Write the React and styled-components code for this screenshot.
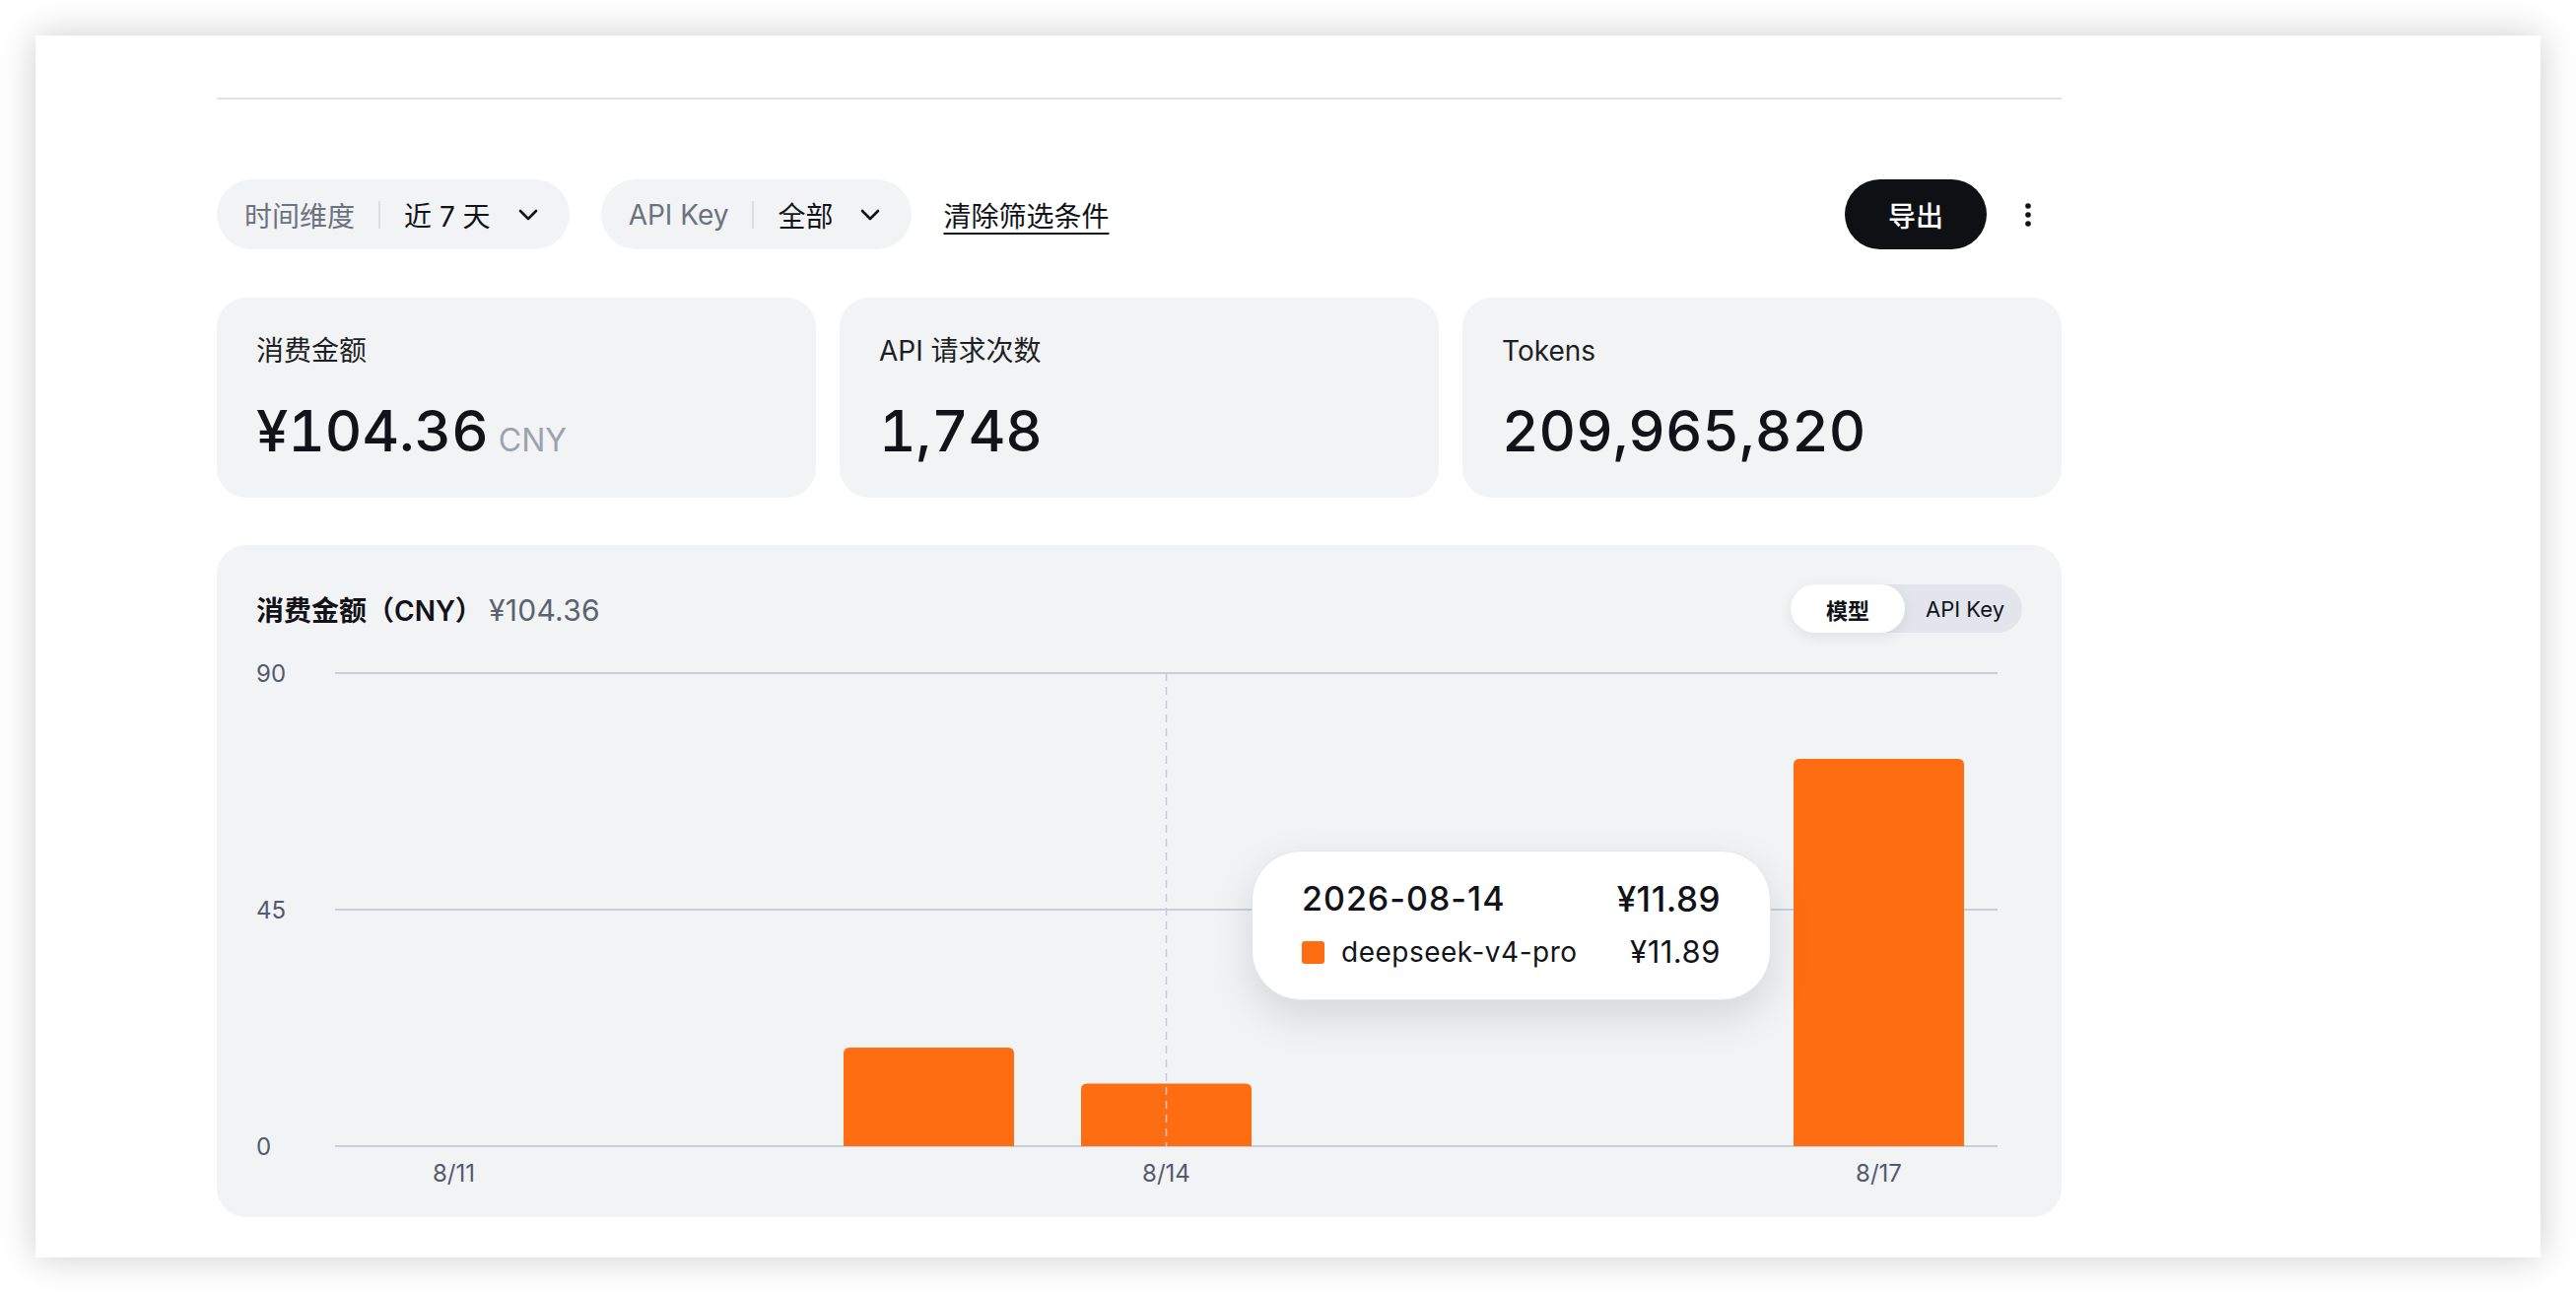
import styled, { createGlobalStyle } from "styled-components";

const GlobalStyle = createGlobalStyle`
  * { box-sizing: border-box; }
  body {
    margin: 0;
    background: #ffffff;
    font-family: "Inter", "Noto Sans CJK SC", sans-serif;
    color: #111318;
  }
`;

const Page = styled.div`
  padding: 36px;
  width: 2614px;
  height: 1312px;
`;

const Frame = styled.div`
  width: 2542px;
  height: 1240px;
  background: #fff;
  box-shadow: 0 0 36px rgba(0, 0, 0, 0.2);
  padding: 63px 0 0 184px;
`;

const Content = styled.div`
  width: 1872px;
`;

const Divider = styled.div`
  height: 2px;
  background: #e2e3e6;
`;

const FilterBar = styled.div`
  margin-top: 81px;
  height: 71px;
  display: flex;
  align-items: center;
  justify-content: space-between;
`;

const FilterGroup = styled.div`
  display: flex;
  align-items: center;
  gap: 32px;
`;

const Pill = styled.div`
  height: 71px;
  display: flex;
  align-items: center;
  padding: 0 31px 0 28px;
  border-radius: 36px;
  background: #f2f3f5;
  font-size: 28px;
`;

const PillLabel = styled.span`
  color: #6b7280;
`;

const PillSep = styled.span`
  width: 2px;
  height: 28px;
  background: #dcdee2;
  margin: 0 24px;
`;

const PillValue = styled.span`
  color: #111318;
  margin-right: 27px;
`;

const ClearLink = styled.a`
  font-size: 28px;
  color: #111318;
  text-decoration: underline;
  text-underline-offset: 6px;
  text-decoration-thickness: 2px;
`;

const RightGroup = styled.div`
  display: flex;
  align-items: center;
  gap: 20px;
  padding-right: 12px;
`;

const ExportButton = styled.button`
  width: 144px;
  height: 71px;
  border: none;
  border-radius: 36px;
  background: #0f1013;
  color: #fff;
  font-family: inherit;
  font-size: 28px;
  font-weight: 500;
`;

const MoreButton = styled.div`
  width: 44px;
  height: 44px;
  display: flex;
  align-items: center;
  justify-content: center;
`;

const StatRow = styled.div`
  margin-top: 49px;
  display: grid;
  grid-template-columns: repeat(3, 1fr);
  gap: 24px;
`;

const StatCard = styled.div`
  height: 203px;
  border-radius: 30px;
  background: #f2f3f5;
  padding: 34px 40px;
`;

const StatLabel = styled.div`
  font-size: 28px;
  line-height: 40px;
  color: #1c1f24;
`;

const StatValue = styled.div`
  margin-top: 25px;
  font-size: 58px;
  line-height: 72px;
  font-weight: 500;
  font-feature-settings: "tnum";
`;

const Unit = styled.span`
  font-size: 32px;
  font-weight: 400;
  color: #9ca3af;
  margin-left: 10px;
`;

const ChartCard = styled.div`
  margin-top: 48px;
  height: 682px;
  border-radius: 30px;
  background: #f2f3f5;
  padding: 40px 40px 12px;
  position: relative;
`;

const ChartHeader = styled.div`
  height: 49px;
  display: flex;
  align-items: center;
  justify-content: space-between;
`;

const ChartTitle = styled.div`
  font-size: 28px;
  font-weight: 600;
  display: flex;
  align-items: baseline;
`;

const ChartTotal = styled.span`
  font-size: 30px;
  font-weight: 400;
  color: #5b6270;
  margin-left: 6px;
  letter-spacing: 0.3px;
`;

const Toggle = styled.div`
  display: flex;
  height: 49px;
  border-radius: 25px;
  background: #e2e6ec;
`;

const ToggleItem = styled.div`
  height: 49px;
  padding: ${(p) => (p.$active ? "0 36px" : "0 18px 0 21px")};
  display: flex;
  align-items: center;
  border-radius: 25px;
  font-size: 22px;
  font-weight: ${(p) => (p.$active ? 600 : 400)};
  background: ${(p) => (p.$active ? "#fff" : "transparent")};
  box-shadow: ${(p) => (p.$active ? "0 4px 14px rgba(0,0,0,0.08)" : "none")};
`;

const ChartArea = styled.div`
  position: relative;
  height: 581px;
`;

const Tooltip = styled.div`
  position: absolute;
  left: 1010px;
  top: 221px;
  width: 527px;
  height: 152px;
  background: #fff;
  border: 1px solid #e4e6ea;
  border-radius: 50px;
  box-shadow: 0 16px 44px rgba(0, 0, 0, 0.12);
  padding: 0 50px 0 50px;
  display: flex;
  flex-direction: column;
  justify-content: center;
  gap: 12px;
`;

const TipRow = styled.div`
  display: flex;
  align-items: center;
  justify-content: space-between;
  font-size: ${(p) => (p.$head ? "34px" : "28px")};
  font-weight: ${(p) => (p.$head ? 500 : 400)};
  line-height: 42px;
  letter-spacing: ${(p) => (p.$head ? "1px" : "0.5px")};
`;

const TipPrice = styled.span`
  font-size: ${(p) => (p.$head ? "35px" : "31px")};
  letter-spacing: 0.5px;
`;

const TipName = styled.span`
  display: flex;
  align-items: center;
  gap: 17px;
`;

const Swatch = styled.span`
  width: 23px;
  height: 23px;
  border-radius: 3px;
  background: #ff6d12;
`;

const Chevron = () => (
  <svg width="22" height="14" viewBox="0 0 22 14" fill="none">
    <path d="M3 3l8 8 8-8" stroke="#111318" strokeWidth="2.6" strokeLinecap="round" strokeLinejoin="round" />
  </svg>
);

const Dots = () => (
  <svg width="8" height="26" viewBox="0 0 8 26">
    <circle cx="4" cy="4" r="2.8" fill="#111318" />
    <circle cx="4" cy="13" r="2.8" fill="#111318" />
    <circle cx="4" cy="22" r="2.8" fill="#111318" />
  </svg>
);

const data = [
  { day: "8/11", value: 0 },
  { day: "8/12", value: 0 },
  { day: "8/13", value: 18.76 },
  { day: "8/14", value: 11.89 },
  { day: "8/15", value: 0 },
  { day: "8/16", value: 0 },
  { day: "8/17", value: 73.71 },
];

const Chart = () => {
  const left = 80;
  const right = 1767;
  const top = 41;
  const base = 521;
  const band = (right - left) / data.length;
  const barW = 173;
  const yOf = (v) => base - (v / 90) * (base - top);
  const cx = (i) => left + band * i + band / 2;
  return (
    <svg width="1792" height="581" viewBox="0 0 1792 581">
      {[90, 45, 0].map((t) => (
        <g key={t}>
          <line x1={left} x2={right} y1={yOf(t)} y2={yOf(t)} stroke="#c8cfdb" strokeWidth="2" />
          <text x="0" y={yOf(t) + 9} fontSize="24" fill="#525a6e" fontFamily="Inter, sans-serif">
            {t}
          </text>
        </g>
      ))}
      {data.map((d, i) =>
        d.value > 0 ? (
          <path
            key={d.day}
            d={`M${cx(i) - barW / 2} ${base} V${yOf(d.value) + 6} q0 -6 6 -6 H${cx(i) + barW / 2 - 6} q6 0 6 6 V${base} Z`}
            fill="#ff6d12"
          />
        ) : null
      )}
      <line x1={cx(3)} x2={cx(3)} y1={top} y2={base} stroke="#c3c9d6" strokeWidth="1.5" strokeDasharray="8 6" />
      {data.map((d, i) =>
        i % 3 === 0 ? (
          <text key={d.day} x={cx(i)} y={557} fontSize="24" fill="#525a6e" textAnchor="middle" fontFamily="Inter, sans-serif">
            {d.day}
          </text>
        ) : null
      )}
    </svg>
  );
};

const stats = [
  { label: "消费金额", value: "¥104.36", unit: "CNY" },
  { label: "API 请求次数", value: "1,748" },
  { label: "Tokens", value: "209,965,820" },
];

export default function App() {
  return (
    <Page>
      <GlobalStyle />
      <Frame>
        <Content>
          <Divider />
          <FilterBar>
            <FilterGroup>
              <Pill>
                <PillLabel>时间维度</PillLabel>
                <PillSep />
                <PillValue>近 7 天</PillValue>
                <Chevron />
              </Pill>
              <Pill>
                <PillLabel>API Key</PillLabel>
                <PillSep />
                <PillValue>全部</PillValue>
                <Chevron />
              </Pill>
              <ClearLink>清除筛选条件</ClearLink>
            </FilterGroup>
            <RightGroup>
              <ExportButton>导出</ExportButton>
              <MoreButton>
                <Dots />
              </MoreButton>
            </RightGroup>
          </FilterBar>

          <StatRow>
            {stats.map((s) => (
              <StatCard key={s.label}>
                <StatLabel>{s.label}</StatLabel>
                <StatValue>
                  {s.value}
                  {s.unit && <Unit>{s.unit}</Unit>}
                </StatValue>
              </StatCard>
            ))}
          </StatRow>

          <ChartCard>
            <ChartHeader>
              <ChartTitle>
                消费金额（CNY）<ChartTotal>¥104.36</ChartTotal>
              </ChartTitle>
              <Toggle>
                <ToggleItem $active>模型</ToggleItem>
                <ToggleItem>API Key</ToggleItem>
              </Toggle>
            </ChartHeader>
            <ChartArea>
              <Chart />
              <Tooltip>
                <TipRow $head>
                  <span>2026-08-14</span>
                  <TipPrice $head>¥11.89</TipPrice>
                </TipRow>
                <TipRow>
                  <TipName>
                    <Swatch />
                    deepseek-v4-pro
                  </TipName>
                  <TipPrice>¥11.89</TipPrice>
                </TipRow>
              </Tooltip>
            </ChartArea>
          </ChartCard>
        </Content>
      </Frame>
    </Page>
  );
}
